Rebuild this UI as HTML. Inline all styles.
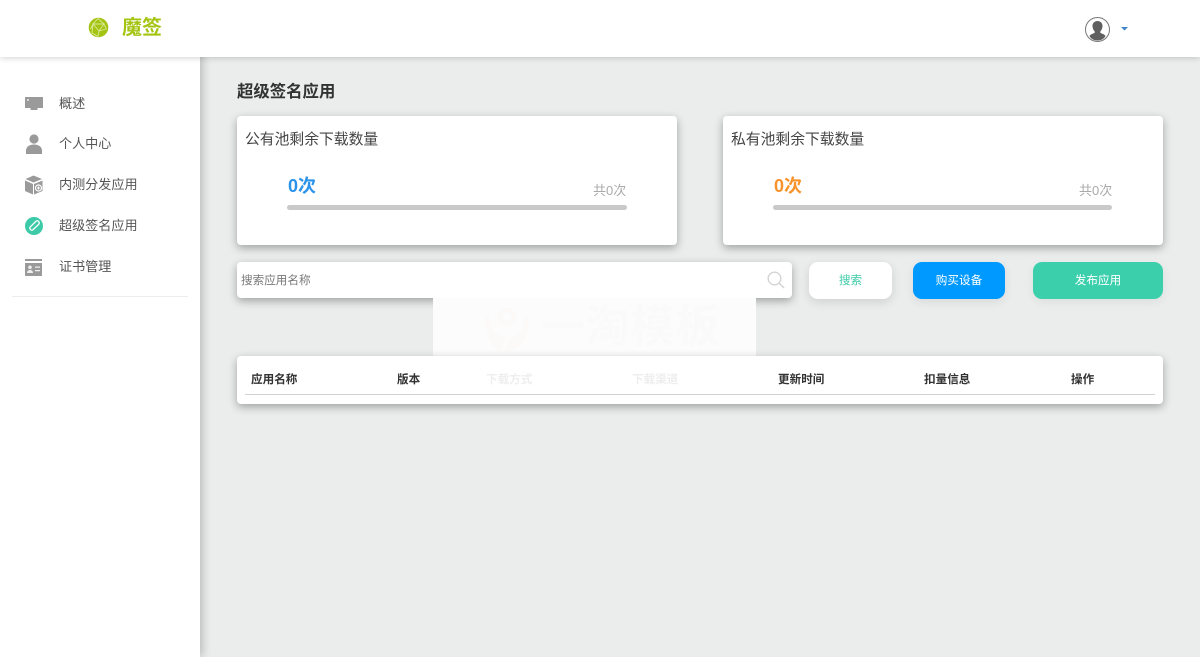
<!DOCTYPE html>
<html lang="zh-CN">
<head>
<meta charset="utf-8">
<title>魔签</title>
<style>
*{box-sizing:border-box;margin:0;padding:0}
html,body{width:1200px;height:657px;overflow:hidden;background:#ebeded}
body{position:relative;font-family:"Liberation Sans","Noto Sans CJK SC",sans-serif;color:#444}
.a{position:absolute;white-space:nowrap}
#side{left:0;top:0;width:200px;height:657px;background:#fff;box-shadow:3px 0 8px rgba(0,0,0,.2)}
#head{left:0;top:0;width:1200px;height:57px;background:#fff;box-shadow:0 1px 6px rgba(0,0,0,.18)}
.nav{left:59px;font-size:13.1px;line-height:20px;color:#555}
.card{background:#fff;border-radius:4px;box-shadow:0 3px 9px rgba(0,0,0,.32)}
.t{font-size:14.8px;line-height:22px;color:#444}
.big{font-size:18px;line-height:26px;font-weight:bold}
.tot{font-size:13px;line-height:18px;color:#aaa}
.bar{height:5px;background:#c9c9c9;border-radius:3px}
.btn{top:262px;height:37px;border-radius:9px;font-size:11.6px;line-height:37px;text-align:center}
.th{top:371px;font-size:11.6px;line-height:18px;font-weight:bold;color:#333}
</style>
</head>
<body>
<div class="a" id="side"></div>
<div class="a" id="head"></div>

<svg class="a" style="left:88px;top:17px" width="21" height="21" viewBox="0 0 21 21">
<circle cx="10.500" cy="10.500" r="9.800" fill="#a4c412"/>
<path d="M10 1.500 5 7l-2.500 5M10 1.500l6 5.500 2.500 5M5 7h11l-5 7zM11 14l-1 5.500M11 14l7-2M5 7l-1 9 6 3.500" fill="none" stroke="#dbe99a" stroke-width=".9"/>
</svg>
<div class="a" style="left:122px;top:15px;font-size:20px;line-height:27px;font-weight:bold;color:#a4c412">魔签</div>

<svg class="a" style="left:1085px;top:17px" width="25" height="25" viewBox="0 0 25 25">
<circle cx="12.500" cy="12.500" r="12" fill="#fff" stroke="#777" stroke-width="1"/>
<path d="M12.500 4c-3.300 0-5.300 2.500-5 5.500.2 2.200 1.100 3.800 2.200 5v1.300c-1.500 1-4.200 1.400-5.200 3.200 1.500 3 4.700 4.500 8 4.500s6.500-1.500 8-4.500c-1-1.800-3.700-2.200-5.200-3.200v-1.300c1.100-1.200 2-2.800 2.200-5 .3-3-1.700-5.500-5-5.500z" fill="#5f5f5f"/>
</svg>
<svg class="a" style="left:1121px;top:26px" width="7" height="5" viewBox="0 0 7 5"><path d="M0 1h7L3.500 4.500z" fill="#3d85c6"/></svg>

<svg class="a" style="left:24px;top:96px" width="20" height="15" viewBox="0 0 20 15">
<path d="M1.500 1h17c.3 0 .5.200.5.500v10c0 .3-.2.500-.5.500h-5v2h-7v-2h-5c-.3 0-.5-.2-.5-.5v-10c0-.3.200-.5.500-.5z" fill="#9a9a9a"/>
<rect x="3" y="3" width="2" height="2" fill="#d8d8d8"/>
</svg>
<div class="a nav" style="top:94px">概述</div>

<svg class="a" style="left:25px;top:134px" width="18" height="20" viewBox="0 0 18 20">
<circle cx="9" cy="5" r="4.600" fill="#9a9a9a"/>
<path d="M1 20v-3.500C1 13 4 10.500 9 10.500s8 2.500 8 6V20z" fill="#9a9a9a"/>
</svg>
<div class="a nav" style="top:134px">个人中心</div>

<svg class="a" style="left:24px;top:175px" width="20" height="20" viewBox="0 0 20 20">
<path d="M9.500 .5 18 4 9.500 7.500 1.500 4z" fill="#9a9a9a"/>
<path d="M1 5.500 9 9v10.500L1 16z" fill="#9a9a9a"/>
<path d="M10 9l8.500-3.500V16L10 19.500z" fill="#9a9a9a"/>
<circle cx="14.500" cy="13" r="3" fill="none" stroke="#fff" stroke-width="1.200"/>
<path d="M14.500 11.500v3M13 13h3" stroke="#fff" stroke-width="1"/>
</svg>
<div class="a nav" style="top:175px">内测分发应用</div>

<svg class="a" style="left:25px;top:217px" width="18" height="18" viewBox="0 0 18 18">
<circle cx="9" cy="9" r="9" fill="#3ccaa8"/>
<path d="M5.500 12.500c-1-1-.8-2 0-2.800L10.700 4.500c1-1 2.300-.9 3 0s.7 2 0 2.800L8.300 12.500c-.9.800-2 .9-2.800 0z" fill="none" stroke="#fff" stroke-width="1.300"/>
</svg>
<div class="a nav" style="top:216px">超级签名应用</div>

<svg class="a" style="left:25px;top:259px" width="17" height="17" viewBox="0 0 17 17">
<rect x="0" y="0" width="17" height="2" fill="#9a9a9a"/>
<rect x="0" y="4" width="17" height="13" fill="#9a9a9a"/>
<circle cx="5" cy="8.300" r="1.800" fill="#eee"/>
<path d="M2 14c0-2 1.300-3 3-3s3 1 3 3z" fill="#eee"/>
<path d="M10 7.500h5v1.300h-5zM10 11h5v1.300h-5z" fill="#eee"/>
</svg>
<div class="a nav" style="top:257px">证书管理</div>

<div class="a" style="left:12px;top:296px;width:176px;height:1px;background:#eee"></div>

<div class="a" style="left:237px;top:81px;font-size:16.400px;line-height:22px;font-weight:bold;color:#333">超级签名应用</div>

<div class="a card" style="left:237px;top:116px;width:440px;height:129px"></div>
<div class="a t" style="left:245px;top:129px">公有池剩余下载数量</div>
<div class="a big" style="left:288px;top:173px;color:#2a93ea">0次</div>
<div class="a tot" style="left:593px;top:182px">共0次</div>
<div class="a bar" style="left:287px;top:205px;width:340px"></div>

<div class="a card" style="left:723px;top:116px;width:440px;height:129px"></div>
<div class="a t" style="left:731px;top:129px">私有池剩余下载数量</div>
<div class="a big" style="left:774px;top:173px;color:#f7932a">0次</div>
<div class="a tot" style="left:1079px;top:182px">共0次</div>
<div class="a bar" style="left:773px;top:205px;width:339px"></div>

<div class="a card" style="left:237px;top:262px;width:555px;height:36px"></div>
<div class="a" style="left:241px;top:272px;font-size:11.600px;line-height:18px;color:#777">搜索应用名称</div>
<svg class="a" style="left:767px;top:271px" width="18" height="18" viewBox="0 0 18 18">
<circle cx="7.500" cy="7.500" r="6.300" fill="none" stroke="#d4d4d4" stroke-width="1.400"/>
<path d="M12 12l5 5" stroke="#d4d4d4" stroke-width="1.500"/>
</svg>

<div class="a btn" style="left:809px;width:83px;background:#fff;color:#3ccaa8;box-shadow:0 3px 10px rgba(0,0,0,.12);line-height:38px">搜索</div>
<div class="a btn" style="left:913px;width:92px;background:#0099ff;color:#fff;box-shadow:0 3px 10px rgba(0,0,0,.08)">购买设备</div>
<div class="a btn" style="left:1033px;width:130px;background:#3ccfac;color:#fff;box-shadow:0 3px 10px rgba(0,0,0,.06)">发布应用</div>

<div class="a" style="left:433px;top:298px;width:323px;height:58px;background:#fcfcfc;overflow:hidden">
<svg class="a" style="left:49px;top:7px" width="50" height="50" viewBox="0 0 50 50">
<path d="M3 18c0 15 9 25 15 29l6-14C14 30 8 24 7 10 4 12 3 15 3 18zM47 18c0 15-10 27-22 29l-3-1 7-14c9-3 13-10 13-22 3 2 5 5 5 8z" fill="#fcfaf9"/>
<circle cx="25" cy="12" r="7" fill="none" stroke="#fcfaf9" stroke-width="5"/>
</svg>
<div class="a" style="left:107px;top:1px;font-size:45px;line-height:56px;font-weight:bold;color:#fafafa">一淘模板</div>
</div>

<div class="a card" style="left:237px;top:356px;width:926px;height:48px"></div>
<div class="a th" style="left:251px">应用名称</div>
<div class="a th" style="left:397px">版本</div>
<div class="a th" style="left:486px;color:#eee">下载方式</div>
<div class="a th" style="left:632px;color:#eee">下载渠道</div>
<div class="a th" style="left:778px">更新时间</div>
<div class="a th" style="left:924px">扣量信息</div>
<div class="a th" style="left:1071px">操作</div>
<div class="a" style="left:245px;top:394px;width:910px;height:1px;background:#d2d2d2"></div>
</body>
</html>
